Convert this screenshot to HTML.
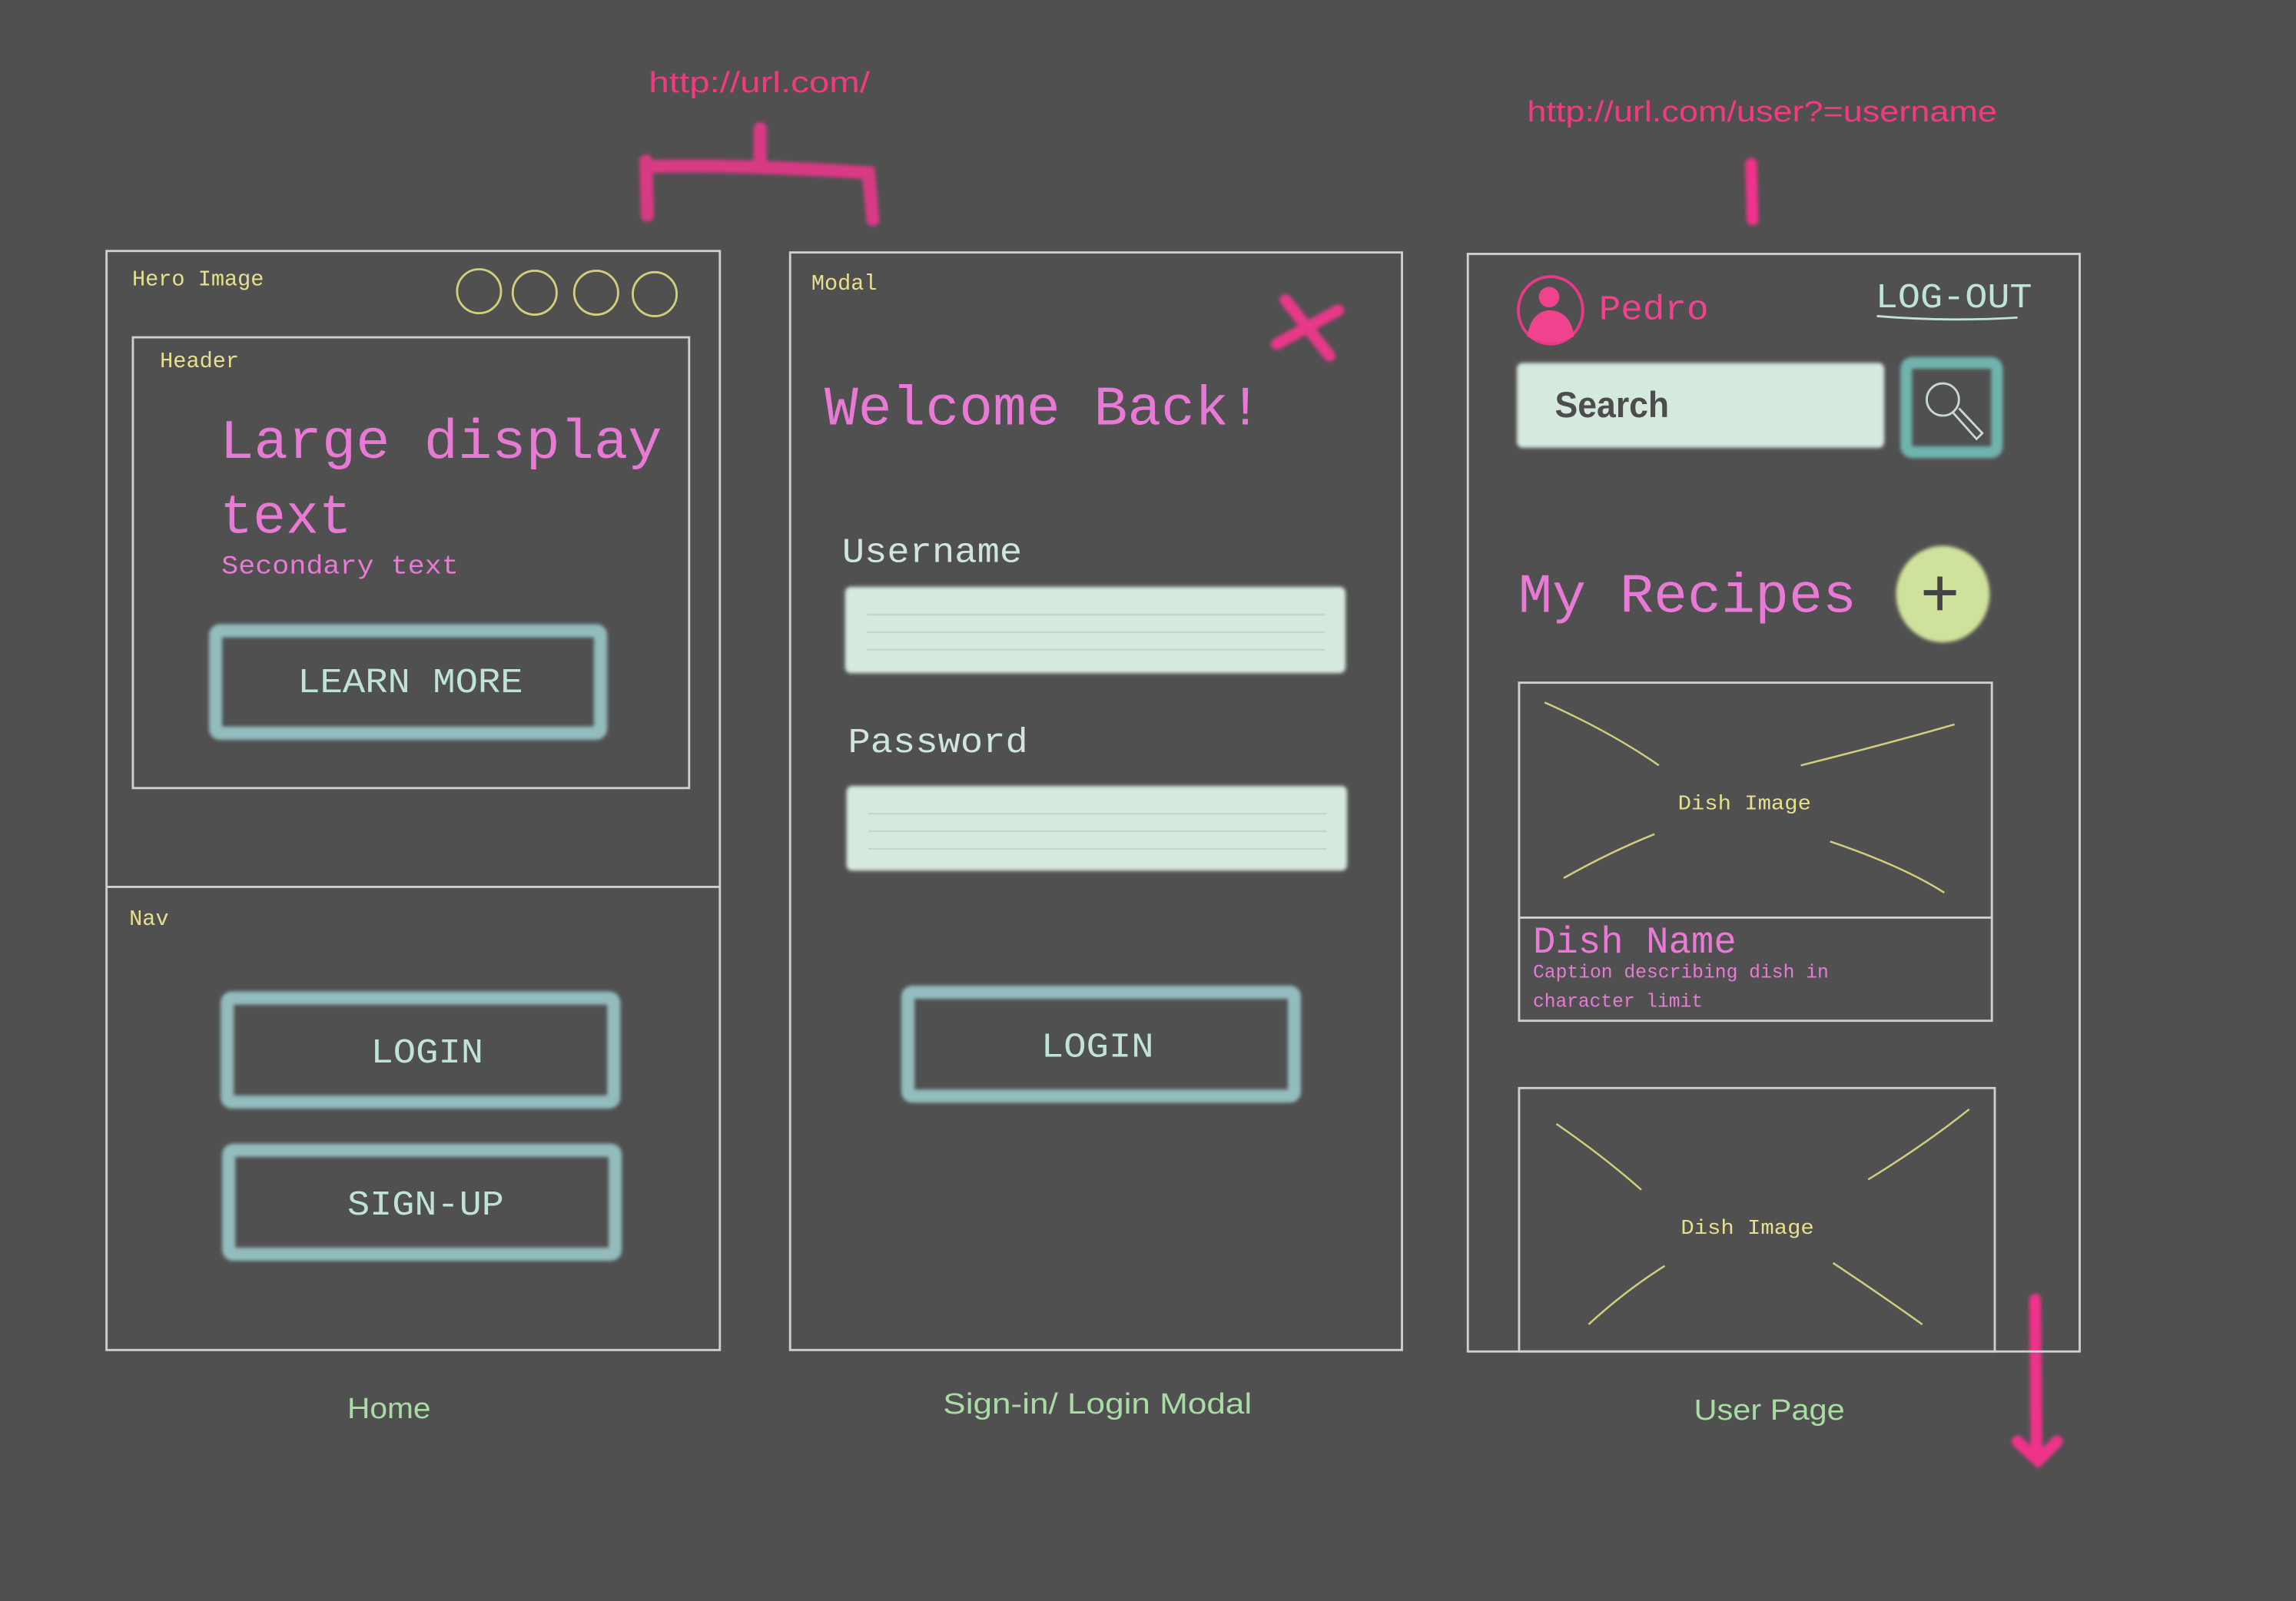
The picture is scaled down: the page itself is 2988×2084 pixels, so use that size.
<!DOCTYPE html>
<html><head><meta charset="utf-8"><style>
html,body{margin:0;padding:0;background:#505050;}
svg{display:block;}
.m{font-family:"Liberation Mono",monospace;}
.s{font-family:"Liberation Sans",sans-serif;}
</style></head><body>
<svg width="2988" height="2084" viewBox="0 0 1568 1094" xmlns="http://www.w3.org/2000/svg">
<defs><filter id="b" filterUnits="userSpaceOnUse" x="0" y="0" width="1568" height="1094"><feGaussianBlur stdDeviation="1.3"/></filter></defs>
<rect width="1568" height="1094" fill="#505050"/>

<!-- URL annotations -->
<text x="443" y="63" class="s" font-size="20" fill="#f23a80" textLength="151" lengthAdjust="spacingAndGlyphs">http://url.com/</text>
<g filter="url(#b)" stroke="#e8388a" stroke-width="9" stroke-linecap="round" fill="none" opacity="0.9">
<path d="M441 110 L442 147 M441 114 Q500 112 593 118 L596 150 M519 88 L519 114"/>
</g>
<text x="1043" y="83" class="s" font-size="20" fill="#f23a80" textLength="321" lengthAdjust="spacingAndGlyphs">http://url.com/user?=username</text>
<path d="M1196 112 L1197 150" stroke="#f0338a" stroke-width="8" stroke-linecap="round" filter="url(#b)"/>
<path d="M1390 888 L1391 992 M1378 985 L1392 998 L1405 985" stroke="#f0338a" stroke-width="8" stroke-linecap="round" fill="none" filter="url(#b)"/>

<!-- Panel 1 -->
<g fill="none" stroke="#cfcfcf" stroke-width="1.5">
<rect x="72.5" y="171.5" width="419" height="751"/>
<line x1="72" y1="606" x2="492" y2="606"/>
<rect x="90.5" y="230.5" width="380" height="308"/>
</g>
<text x="90" y="195" class="m" font-size="15" fill="#e6e08e" textLength="90" lengthAdjust="spacingAndGlyphs">Hero Image</text>
<g fill="none" stroke="#d2cf7c" stroke-width="1.5">
<ellipse cx="327" cy="199" rx="15" ry="15"/><ellipse cx="365" cy="200" rx="15" ry="15"/>
<ellipse cx="407" cy="200" rx="15" ry="15"/><ellipse cx="447" cy="201" rx="15" ry="15"/>
</g>
<text x="109" y="251" class="m" font-size="15" fill="#e6e08e" textLength="54" lengthAdjust="spacingAndGlyphs">Header</text>
<text x="150" y="313" class="m" font-size="38" fill="#e87ad6" textLength="302" lengthAdjust="spacingAndGlyphs">Large display</text>
<text x="150" y="364" class="m" font-size="38" fill="#e87ad6" textLength="90" lengthAdjust="spacingAndGlyphs">text</text>
<text x="151" y="392" class="m" font-size="18" fill="#e87ad6" textLength="162" lengthAdjust="spacingAndGlyphs">Secondary text</text>
<g fill="none" stroke="#93bcbd" stroke-width="9" filter="url(#b)">
<rect x="147" y="431" width="263" height="70" rx="3"/>
<rect x="155" y="682" width="264" height="71" rx="3"/>
<rect x="156" y="786" width="264" height="71" rx="3"/>
<rect x="620" y="678" width="264" height="71" rx="3"/>
</g>
<text x="203" y="473" class="m" font-size="24" fill="#bfe3d6" textLength="154" lengthAdjust="spacingAndGlyphs">LEARN MORE</text>
<text x="88" y="632" class="m" font-size="15" fill="#e6e08e" textLength="27" lengthAdjust="spacingAndGlyphs">Nav</text>
<text x="253" y="726" class="m" font-size="24" fill="#bfe3d6" textLength="77" lengthAdjust="spacingAndGlyphs">LOGIN</text>
<text x="237" y="830" class="m" font-size="24" fill="#bfe3d6" textLength="107" lengthAdjust="spacingAndGlyphs">SIGN-UP</text>
<text x="237" y="969" class="s" font-size="20" fill="#a9dca4" textLength="57" lengthAdjust="spacingAndGlyphs">Home</text>

<!-- Panel 2 -->
<rect x="539.5" y="172.5" width="418" height="750" fill="none" stroke="#cfcfcf" stroke-width="1.5"/>
<text x="554" y="198" class="m" font-size="15" fill="#e6e08e" textLength="45" lengthAdjust="spacingAndGlyphs">Modal</text>
<path d="M878 205 L908 243 M872 235 L914 212" stroke="#e8388a" stroke-width="8" stroke-linecap="round" filter="url(#b)"/>
<text x="563" y="290" class="m" font-size="38" fill="#e87ad6" textLength="299" lengthAdjust="spacingAndGlyphs">Welcome Back!</text>
<text x="575" y="384" class="m" font-size="24" fill="#cfe6dc" textLength="123" lengthAdjust="spacingAndGlyphs">Username</text>
<g filter="url(#b)">
<rect x="577" y="401" width="342" height="59" rx="4" fill="#d5e9de"/>
<rect x="578" y="537" width="342" height="58" rx="4" fill="#d5e9de"/>
<rect x="1036" y="248" width="251" height="58" rx="4" fill="#d5e9de"/>
</g>
<g stroke="#c2d7cc" stroke-width="1.2">
<line x1="592" y1="420" x2="905" y2="420"/><line x1="592" y1="432" x2="905" y2="432"/><line x1="592" y1="444" x2="905" y2="444"/>
<line x1="593" y1="556" x2="906" y2="556"/><line x1="593" y1="568" x2="906" y2="568"/><line x1="593" y1="580" x2="906" y2="580"/>
</g>
<text x="579" y="514" class="m" font-size="24" fill="#cfe6dc" textLength="123" lengthAdjust="spacingAndGlyphs">Password</text>
<text x="711" y="722" class="m" font-size="24" fill="#bfe3d6" textLength="77" lengthAdjust="spacingAndGlyphs">LOGIN</text>
<text x="644" y="966" class="s" font-size="20" fill="#a9dca4" textLength="211" lengthAdjust="spacingAndGlyphs">Sign-in/ Login Modal</text>

<!-- Panel 3 -->
<rect x="1002.5" y="173.5" width="418" height="750" fill="none" stroke="#cfcfcf" stroke-width="1.5"/>
<ellipse cx="1059" cy="212" rx="22" ry="23" fill="none" stroke="#e8388a" stroke-width="2"/>
<circle cx="1058" cy="203" r="7" fill="#f0438e"/>
<path d="M1043 230 Q1046 212 1059 212 Q1073 213 1075 230 Q1059 238 1043 230 Z" fill="#f0438e"/>
<text x="1092" y="218" class="m" font-size="24" fill="#f0438e" textLength="75" lengthAdjust="spacingAndGlyphs">Pedro</text>
<text x="1281" y="210" class="m" font-size="24" fill="#bfe3d6" textLength="107" lengthAdjust="spacingAndGlyphs">LOG-OUT</text>
<path d="M1282 216 Q1330 220 1378 217" stroke="#bfe3d6" stroke-width="1.5" fill="none"/>
<text x="1062" y="285" class="s" font-size="25" font-weight="bold" fill="#4d4d4d" textLength="78" lengthAdjust="spacingAndGlyphs">Search</text>
<rect x="1302" y="248" width="62" height="61" rx="4" fill="none" stroke="#6fb3ad" stroke-width="8" filter="url(#b)"/>
<circle cx="1327" cy="273" r="11" fill="none" stroke="#c7d8d0" stroke-width="1.5"/>
<path d="M1334 282 L1350 300 L1354 296 L1338 279" fill="none" stroke="#c7d8d0" stroke-width="1.5"/>
<text x="1037" y="418" class="m" font-size="38" fill="#e87ad6" textLength="231" lengthAdjust="spacingAndGlyphs">My Recipes</text>
<ellipse cx="1327" cy="406" rx="32" ry="33" fill="#cfe29b" filter="url(#b)"/>
<path d="M1325 394 V417 M1314 405 H1336" stroke="#444" stroke-width="3.5"/>
<g fill="none" stroke="#cfcfcf" stroke-width="1.5">
<rect x="1037.5" y="466.5" width="323" height="231"/>
<line x1="1037" y1="627" x2="1361" y2="627"/>
<rect x="1037.5" y="743.5" width="325" height="180"/>
</g>
<g fill="none" stroke="#d2cf7c" stroke-width="1.3">
<path d="M1055 480 Q1100 500 1133 523 M1230 523 Q1290 508 1335 495 M1068 600 Q1100 582 1130 570 M1250 575 Q1300 592 1328 610"/>
<path d="M1063 768 Q1095 790 1121 813 M1276 806 Q1315 782 1345 758 M1085 905 Q1110 882 1137 865 M1252 863 Q1285 885 1313 905"/>
</g>
<text x="1146" y="553" class="m" font-size="14" fill="#e6e08e" textLength="91" lengthAdjust="spacingAndGlyphs">Dish Image</text>
<text x="1047" y="651" class="m" font-size="26" fill="#e87ad6" textLength="139" lengthAdjust="spacingAndGlyphs">Dish Name</text>
<text x="1047" y="668" class="m" font-size="13" fill="#e87ad6" textLength="202" lengthAdjust="spacingAndGlyphs">Caption describing dish in</text>
<text x="1047" y="688" class="m" font-size="13" fill="#e87ad6" textLength="116" lengthAdjust="spacingAndGlyphs">character limit</text>
<text x="1148" y="843" class="m" font-size="14" fill="#e6e08e" textLength="91" lengthAdjust="spacingAndGlyphs">Dish Image</text>
<text x="1157" y="970" class="s" font-size="20" fill="#a9dca4" textLength="103" lengthAdjust="spacingAndGlyphs">User Page</text>
</svg>
</body></html>
